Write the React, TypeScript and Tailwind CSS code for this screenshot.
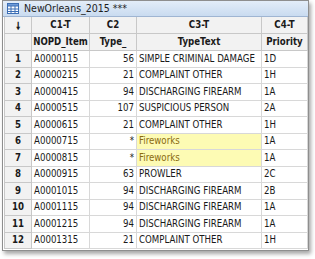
import React from 'react';

const ROWS = [
  { n: 1, item: "A0000115", type: "56", text: "SIMPLE CRIMINAL DAMAGE", pr: "1D" },
  { n: 2, item: "A0000215", type: "21", text: "COMPLAINT OTHER", pr: "1H" },
  { n: 3, item: "A0000415", type: "94", text: "DISCHARGING FIREARM", pr: "1A" },
  { n: 4, item: "A0000515", type: "107", text: "SUSPICIOUS PERSON", pr: "2A" },
  { n: 5, item: "A0000615", type: "21", text: "COMPLAINT OTHER", pr: "1H" },
  { n: 6, item: "A0000715", type: "*", text: "Fireworks", pr: "1A", hl: true },
  { n: 7, item: "A0000815", type: "*", text: "Fireworks", pr: "1A", hl: true },
  { n: 8, item: "A0000915", type: "63", text: "PROWLER", pr: "2C" },
  { n: 9, item: "A0001015", type: "94", text: "DISCHARGING FIREARM", pr: "2B" },
  { n: 10, item: "A0001115", type: "94", text: "DISCHARGING FIREARM", pr: "1A" },
  { n: 11, item: "A0001215", type: "94", text: "DISCHARGING FIREARM", pr: "1A" },
  { n: 12, item: "A0001315", type: "21", text: "COMPLAINT OTHER", pr: "1H" },
];

const cols = "grid grid-cols-[27px_58px_47px_125px_46px]";
const hd = "flex items-center justify-center border-r border-b border-[#c8c8c8] bg-[#f2f2f2] font-bold text-[#1a1a1a]";
const cell = "flex items-center border-r border-b border-[#d8d8d8] px-[2px] whitespace-nowrap overflow-hidden";

function GridIcon() {
  return (
    <svg width="12" height="11" viewBox="0 0 12 11">
      <rect x="0.5" y="0.5" width="11" height="10" fill="#fff" stroke="#3d6fb5" />
      <rect x="0.5" y="0.5" width="11" height="2.5" fill="#6f9bd8" stroke="#3d6fb5" />
      <line x1="4" y1="3" x2="4" y2="10.5" stroke="#3d6fb5" />
      <line x1="8" y1="3" x2="8" y2="10.5" stroke="#3d6fb5" />
      <line x1="0.5" y1="6" x2="11.5" y2="6" stroke="#3d6fb5" />
      <line x1="0.5" y1="8.5" x2="11.5" y2="8.5" stroke="#3d6fb5" />
    </svg>
  );
}

export default function App() {
  return (
    <div className="w-[315px] h-[259px] bg-white overflow-hidden text-[9.6px]" style={{ fontFamily: '"DejaVu Sans Condensed", "Liberation Sans", sans-serif' }}>
      <div className="ml-[2px] w-[307px] h-[251px] border border-[#8e8e8e] bg-white shadow-[2px_3px_4px_rgba(0,0,0,0.35)] overflow-hidden">
        <div className="h-[16px] flex items-center gap-[5px] px-[4px] bg-gradient-to-b from-[#e3edf8] to-[#c9dbf0] border-b border-[#9fb5d2] text-[#1e1e1e]">
          <GridIcon />
          <span className="text-[10.5px] leading-none">NewOrleans_2015 ***</span>
        </div>
        <div className="ml-[1px] border-l border-[#c8c8c8]">
          <div className={cols + " h-[17px]"}>
            <div className={hd}><span className="text-[10px]">🠗</span></div>
            <div className={hd}>C1-T</div>
            <div className={hd}>C2</div>
            <div className={hd}>C3-T</div>
            <div className={hd}>C4-T</div>
          </div>
          <div className={cols + " h-[17px]"}>
            <div className={hd}></div>
            <div className={hd}>NOPD_Item</div>
            <div className={hd}>Type_</div>
            <div className={hd}>TypeText</div>
            <div className={hd}>Priority</div>
          </div>
          {ROWS.map((r) => (
            <div key={r.n} className={cols + " h-[16.5px]"}>
              <div className={hd}>{r.n}</div>
              <div className={cell + " text-[#1a1a1a]"}>{r.item}</div>
              <div className={cell + " justify-end text-[#1a1a1a]"}>{r.type}</div>
              <div className={cell + (r.hl ? " bg-[#fdfbb4] text-[#8a6a10]" : " text-[#1a1a1a]")}>{r.text}</div>
              <div className={cell + " text-[#1a1a1a]"}>{r.pr}</div>
            </div>
          ))}
        </div>
      </div>
    </div>
  );
}
